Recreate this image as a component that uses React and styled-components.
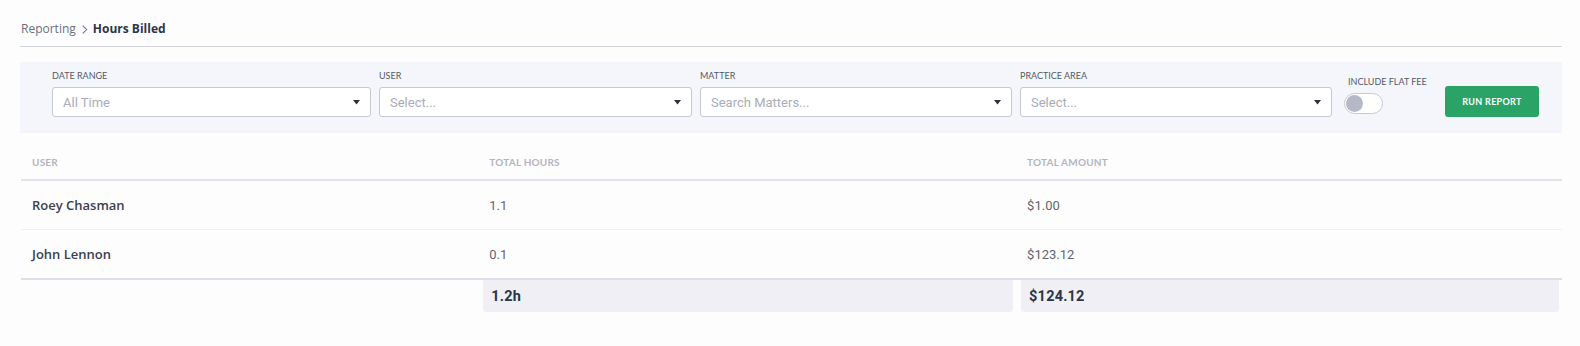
import React, { useState } from "react"
import styled, { createGlobalStyle } from "styled-components"

const GlobalStyle = createGlobalStyle`
  body {
    margin: 0;
    background: #fdfdfe;
    font-family: "Lato", "Open Sans", sans-serif;
  }
`

const filters = [
  { label: "Date Range", placeholder: "All Time", width: 319 },
  { label: "User", placeholder: "Select...", width: 313 },
  { label: "Matter", placeholder: "Search Matters...", width: 312 },
  { label: "Practice Area", placeholder: "Select...", width: 312 },
]

const rows = [
  { user: "Roey Chasman", hours: "1.1", amount: "$1.00" },
  { user: "John Lennon", hours: "0.1", amount: "$123.12" },
]

const App = () => {
  const [flatFee, setFlatFee] = useState(false)
  return (
    <>
      <GlobalStyle />
      <Page>
        <Breadcrumb>
          <Crumb>Reporting</Crumb>
          <Chevron viewBox="0 0 8 12">
            <path d="M2 1.5 L6.5 6 L2 10.5" fill="none" stroke="#6b6f7a" strokeWidth="1.2" />
          </Chevron>
          <Current>Hours Billed</Current>
        </Breadcrumb>

        <FilterPanel>
          {filters.map((f) => (
            <Field key={f.label} width={f.width}>
              <Label>{f.label}</Label>
              <Select>
                <Placeholder>{f.placeholder}</Placeholder>
                <Caret viewBox="0 0 7 5">
                  <path d="M0 0 H7 L3.5 4.5 Z" fill="#2f3340" />
                </Caret>
              </Select>
            </Field>
          ))}
          <ToggleField>
            <Label indent>Include Flat Fee</Label>
            <Toggle on={flatFee} onClick={() => setFlatFee(!flatFee)}>
              <Knob on={flatFee} />
            </Toggle>
          </ToggleField>
          <RunButton>Run Report</RunButton>
        </FilterPanel>

        <Table>
          <HeadRow>
            <HeadCell first>User</HeadCell>
            <HeadCell>Total Hours</HeadCell>
            <HeadCell>Total Amount</HeadCell>
          </HeadRow>
          {rows.map((r, i) => (
            <Row key={r.user} last={i === rows.length - 1}>
              <NameCell>{r.user}</NameCell>
              <NumCell>{r.hours}</NumCell>
              <NumCell>{r.amount}</NumCell>
            </Row>
          ))}
          <TotalsRow>
            <div />
            <TotalCell>
              <TotalBox>1.2h</TotalBox>
            </TotalCell>
            <TotalCell last>
              <TotalBox>$124.12</TotalBox>
            </TotalCell>
          </TotalsRow>
        </Table>
      </Page>
    </>
  )
}

export default App

const Page = styled.div`
  padding: 0 18px 0 20px;
`

const Breadcrumb = styled.div`
  display: flex;
  align-items: center;
  gap: 5px;
  padding: 21px 0 9px 1px;
  line-height: 16px;
  font-family: "Open Sans", sans-serif;
  font-size: 12px;
  border-bottom: 1px solid #d3d5db;
`

const Crumb = styled.span`
  color: #6b6f7a;
`

const Chevron = styled.svg`
  width: 7px;
  height: 11px;
`

const Current = styled.span`
  color: #2f3447;
  font-weight: 700;
`

const FilterPanel = styled.div`
  margin-top: 15px;
  background: #f4f6fb;
  display: flex;
  align-items: flex-end;
  padding: 8px 23px 16px 32px;
`

const Field = styled.div`
  width: ${(p) => p.width}px;
  margin-right: 8px;
  display: flex;
  flex-direction: column;
`

const Label = styled.div`
  font-size: 9px;
  line-height: 12px;
  text-transform: uppercase;
  color: #555966;
  margin-bottom: 5px;
  padding-left: ${(p) => (p.indent ? "4px" : "0")};
  white-space: nowrap;
`

const Select = styled.div`
  height: 30px;
  box-sizing: border-box;
  background: #fff;
  border: 1px solid #c6c9d1;
  border-radius: 3px;
  display: flex;
  align-items: center;
  justify-content: space-between;
  padding: 0 10px 0 10px;
`

const Placeholder = styled.span`
  font-family: "Roboto", "Liberation Sans", sans-serif;
  font-size: 13px;
  color: #a9acb6;
`

const Caret = styled.svg`
  width: 7px;
  height: 5px;
`

const ToggleField = styled.div`
  display: flex;
  flex-direction: column;
  margin-left: 4px;
  padding-bottom: 3px;
  width: 96px;
`

const Toggle = styled.div`
  width: 39px;
  height: 21px;
  box-sizing: border-box;
  border: 1px solid #c6c9d1;
  border-radius: 11px;
  background: ${(p) => (p.on ? "#29a366" : "#fff")};
  padding: 1px;
  cursor: pointer;
`

const Knob = styled.div`
  width: 17px;
  height: 17px;
  border-radius: 50%;
  background: ${(p) => (p.on ? "#fff" : "#b5b9c5")};
  margin-left: ${(p) => (p.on ? "18px" : "0")};
`

const RunButton = styled.button`
  margin-left: auto;
  width: 94px;
  height: 31px;
  border: none;
  border-radius: 3px;
  background: #29a466;
  color: #fff;
  font-family: "Lato", sans-serif;
  font-weight: 700;
  font-size: 9px;
  letter-spacing: 0.3px;
  text-transform: uppercase;
`

const Table = styled.div`
  padding-left: 1px;
`

const grid = `
  display: grid;
  grid-template-columns: 30% 34.9% 35.1%;
`

const HeadRow = styled.div`
  ${grid}
  padding: 22px 0 10px;
  border-bottom: 2px solid #e2e4ed;
`

const HeadCell = styled.div`
  font-size: 10px;
  line-height: 14px;
  font-weight: 700;
  color: #b2b5c1;
  text-transform: uppercase;
  letter-spacing: 0.2px;
  padding-left: ${(p) => (p.first ? "11px" : "6px")};
`

const Row = styled.div`
  ${grid}
  height: 48px;
  align-items: center;
  border-bottom: ${(p) => (p.last ? "2px solid #dcdfe8" : "1px solid #f0f0f4")};
`

const NameCell = styled.div`
  padding-left: 11px;
  font-family: "Open Sans", sans-serif;
  font-size: 13px;
  font-weight: 600;
  color: #3b3f4e;
`

const NumCell = styled.div`
  padding-left: 6px;
  font-family: "Roboto", "Liberation Sans", sans-serif;
  font-size: 13px;
  color: #62656f;
`

const TotalsRow = styled.div`
  ${grid}
`

const TotalCell = styled.div`
  padding-right: ${(p) => (p.last ? "3px" : "8px")};
`

const TotalBox = styled.div`
  height: 32px;
  display: flex;
  align-items: center;
  padding-left: 8px;
  background: #efeff5;
  border-radius: 0 0 3px 3px;
  font-family: "Roboto", "Liberation Sans", sans-serif;
  font-weight: 700;
  font-size: 14.5px;
  letter-spacing: 0.2px;
  color: #2e3444;
`
